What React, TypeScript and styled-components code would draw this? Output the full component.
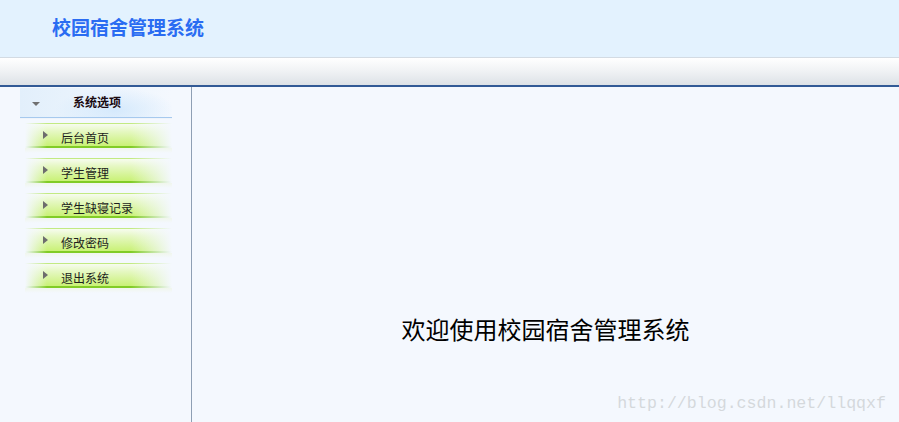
import React from "react";
import styled, { createGlobalStyle } from "styled-components";

const Global = createGlobalStyle`
  html, body { margin: 0; padding: 0; }
  body {
    width: 899px;
    height: 422px;
    overflow: hidden;
    font-family: "Noto Sans CJK SC", "Noto Sans", sans-serif;
    background: #f4f8fe;
  }
`;

const Page = styled.div`
  width: 899px;
  height: 422px;
  display: flex;
  flex-direction: column;
  position: relative;
`;

const Header = styled.header`
  height: 57px;
  background: #e3f2fe;
  border-bottom: 1px solid #d3dbe3;
  display: flex;
  align-items: center;
  padding-left: 52px;
  box-sizing: border-box;
  height: 58px;
`;

const Title = styled.h1`
  margin: 0 0 4px 0;
  font-size: 19px;
  font-weight: bold;
  color: #2a6cf2;
  letter-spacing: 0;
`;

const ToolBar = styled.div`
  height: 27px;
  background: linear-gradient(to bottom, #ffffff 0%, #f1f3f5 45%, #dde2e7 100%);
  border-bottom: 2px solid #325a96;
`;

const Body = styled.div`
  flex: 1;
  display: flex;
  min-height: 0;
`;

const Sidebar = styled.nav`
  width: 191px;
  border-right: 1px solid #8e9fb4;
  box-sizing: content-box;
  padding: 1px 0 0 20px;
  box-sizing: border-box;
  width: 192px;
  display: flex;
  flex-direction: column;
  background: #f4f8fe;
`;

const MenuHead = styled.div`
  width: 152px;
  height: 30px;
  box-sizing: border-box;
  display: flex;
  align-items: center;
  position: relative;
  background:
    radial-gradient(ellipse 60px 22px at 95px 22px, rgba(210, 232, 252, 0.9), rgba(210, 232, 252, 0) 100%),
    linear-gradient(to right, #e2effb 0%, #edf5fd 60%, #f4f8fe 100%);
  border-bottom: 1px solid #a6c9ee;
  box-shadow: 0 1px 0 #eef4fb;
`;

const DownArrow = styled.span`
  width: 0;
  height: 0;
  border-left: 4px solid transparent;
  border-right: 4px solid transparent;
  border-top: 4px solid #707070;
  margin: 3px 0 0 12px;
`;

const HeadText = styled.span`
  font-size: 12px;
  font-weight: bold;
  color: #1a0a10;
  margin-left: 33px;
  margin-top: -2px;
`;

const Item = styled.a`
  width: 147px;
  height: 30px;
  margin: 5px 0 0 5px;
  box-sizing: border-box;
  display: flex;
  align-items: center;
  position: relative;
  text-decoration: none;
  cursor: pointer;
  background:
    linear-gradient(to bottom, transparent 0, transparent 25px, #f0f6ec 25px, #f4f8fe 30px),
    linear-gradient(to right, #f4f8fe 0%, rgba(244,248,254,0) 15%, rgba(244,248,254,0) 72%, #f4f8fe 100%),
    linear-gradient(to bottom, #c2ea82 0, #c2ea82 1px, #f7fcef 1px, #e6f8c4 8px, #c9f176 23px, #81cc26 23px, #81cc26 25px, transparent 25px);
  background-repeat: no-repeat;
`;

const RightArrow = styled.span`
  width: 0;
  height: 0;
  border-top: 4px solid transparent;
  border-bottom: 4px solid transparent;
  border-left: 5px solid #6d6d6d;
  margin: -6px 0 0 18px;
`;

const ItemText = styled.span`
  font-size: 12px;
  color: #1d1d1d;
  margin: -2px 0 0 13px;
`;

const Content = styled.main`
  flex: 1;
  display: flex;
  justify-content: center;
  padding-top: 227px;
  box-sizing: border-box;
`;

const Welcome = styled.h2`
  margin: 0;
  font-size: 24px;
  font-weight: normal;
  color: #000;
  line-height: 30px;
  height: 30px;
`;

const Watermark = styled.div`
  position: absolute;
  right: 13px;
  bottom: 9px;
  font-family: "Liberation Mono", "DejaVu Sans Mono", monospace;
  font-size: 16.6px;
  color: #d4d8dc;
`;

const items = ["后台首页", "学生管理", "学生缺寝记录", "修改密码", "退出系统"];

export default function App() {
  return (
    <>
      <Global />
      <Page>
        <Header>
          <Title>校园宿舍管理系统</Title>
        </Header>
        <ToolBar />
        <Body>
          <Sidebar>
            <MenuHead>
              <DownArrow />
              <HeadText>系统选项</HeadText>
            </MenuHead>
            {items.map((t) => (
              <Item key={t}>
                <RightArrow />
                <ItemText>{t}</ItemText>
              </Item>
            ))}
          </Sidebar>
          <Content>
            <Welcome>欢迎使用校园宿舍管理系统</Welcome>
          </Content>
        </Body>
        <Watermark>http://blog.csdn.net/llqqxf</Watermark>
      </Page>
    </>
  );
}
